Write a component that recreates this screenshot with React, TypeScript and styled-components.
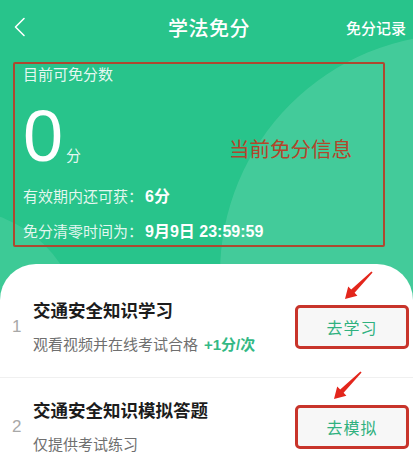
import React from 'react';
import styled, { createGlobalStyle } from 'styled-components';

const GlobalStyle = createGlobalStyle`
  html, body {
    margin: 0;
    padding: 0;
    background: #28c48b;
  }
  * {
    box-sizing: border-box;
  }
`;

type Task = {
    no: number;
    title: string;
    desc: string;
    bonus?: string;
    action: string;
    arrowLeft: number;
};

const tasks: Task[] = [
    { no: 1, title: '交通安全知识学习', desc: '观看视频并在线考试合格', bonus: '+1分/次', action: '去学习', arrowLeft: 47 },
    { no: 2, title: '交通安全知识模拟答题', desc: '仅提供考试练习', action: '去模拟', arrowLeft: 36 },
];

const BackIcon = () => (
    <svg width="12" height="20" viewBox="0 0 12 20">
        <polyline points="10,1.5 1.5,10 10,18.5" fill="none" stroke="#fff" strokeWidth="1.6" strokeLinecap="round" strokeLinejoin="round" />
    </svg>
);

const ArrowIcon = () => (
    <svg width="32" height="32" viewBox="0 0 32 32">
        <polygon
            points="29.4,1.4 30.6,2.6 12.6,22.8 15.4,25.8 3,29 6.2,16.6 9.2,19.4"
            fill="#e3261c"
        />
    </svg>
);

const App: React.FC = () => {
    return (
        <Page>
            <GlobalStyle />
            <BigCircle />
            <SmallCircle />

            <Header>
                <BackBtn><BackIcon /></BackBtn>
                <HeaderTitle>学法免分</HeaderTitle>
                <HeaderLink>免分记录</HeaderLink>
            </Header>

            <InfoBox>
                <InfoLabel>目前可免分数</InfoLabel>
                <ScoreRow>
                    <ScoreNum>0</ScoreNum>
                    <ScoreUnit>分</ScoreUnit>
                    <Annotation>当前免分信息</Annotation>
                </ScoreRow>
                <InfoLine>有效期内还可获：<InfoValue>6分</InfoValue></InfoLine>
                <InfoLine>免分清零时间为：<InfoValue>9月9日 23:59:59</InfoValue></InfoLine>
            </InfoBox>

            <Card>
                {tasks.map(t => (
                    <TaskRow key={t.no}>
                        <TaskNo>{t.no}</TaskNo>
                        <TaskText>
                            <TaskTitle>{t.title}</TaskTitle>
                            <TaskDesc>
                                {t.desc}
                                {t.bonus && <Bonus>{t.bonus}</Bonus>}
                            </TaskDesc>
                        </TaskText>
                        <ActionWrap>
                            <Arrow $left={t.arrowLeft}><ArrowIcon /></Arrow>
                            <ActionBtn>{t.action}</ActionBtn>
                        </ActionWrap>
                    </TaskRow>
                ))}
            </Card>
        </Page>
    );
};

const Page = styled.div`
  position: relative;
  width: 413px;
  height: 461px;
  overflow: hidden;
  background: #28c48b;
  font-family: "Liberation Sans", "Noto Sans CJK SC", sans-serif;
  color: #fff;
`;

/* 背景装饰圆 */
const BigCircle = styled.div`
  position: absolute;
  left: 220px;
  top: 34px;
  width: 480px;
  height: 480px;
  border-radius: 50%;
  background: rgba(255, 255, 255, 0.13);
`;

const SmallCircle = styled.div`
  position: absolute;
  left: -160px;
  top: 210px;
  width: 240px;
  height: 240px;
  border-radius: 50%;
  background: rgba(255, 255, 255, 0.1);
`;

/* 顶栏：左中右三栏，标题居中 */
const Header = styled.div`
  position: relative;
  height: 54px;
  display: grid;
  grid-template-columns: 1fr auto 1fr;
  align-items: center;
  padding: 0 7px 0 14px;
`;

const BackBtn = styled.div`
  display: flex;
  align-items: center;
`;

const HeaderTitle = styled.div`
  font-size: 20px;
  font-weight: 500;
  letter-spacing: 0.5px;
  margin-left: -2px;
`;

const HeaderLink = styled.div`
  justify-self: end;
  font-size: 15px;
  font-weight: 500;
`;

const InfoBox = styled.div`
  position: relative;
  margin: 8px 28px 0 13px;
  height: 185px;
  border: 2px solid #ad4830;
  border-radius: 2px;
  padding: 1px 0 3px 8px;
`;

const InfoLabel = styled.div`
  font-size: 15px;
  line-height: 20px;
  color: rgba(255, 255, 255, 0.9);
`;

const ScoreRow = styled.div`
  display: flex;
  align-items: baseline;
  margin-top: 15px;
  height: 72px;
`;

const ScoreNum = styled.div`
  font-size: 72px;
  line-height: 72px;
  font-family: "Liberation Sans", sans-serif;
`;

const ScoreUnit = styled.div`
  font-size: 15px;
  margin-left: 3px;
  color: rgba(255, 255, 255, 0.9);
`;

const Annotation = styled.div`
  margin-left: 148px;
  font-size: 20.5px;
  color: #b3452b;
  position: relative;
  top: -4px;
`;

const InfoLine = styled.div`
  margin-top: 15px;
  font-size: 15px;
  line-height: 20px;
  color: rgba(255, 255, 255, 0.88);
`;

const InfoValue = styled.span`
  font-size: 16px;
  font-weight: 700;
  color: #fff;
  margin-left: 2px;
`;

const Card = styled.div`
  position: relative;
  margin-top: 17px;
  background: #fff;
  border-radius: 36px 36px 0 0;
  padding-top: 14px;
  height: 200px;
`;

const TaskRow = styled.div`
  display: flex;
  align-items: center;
  padding: 21px 4px 22px 12px;
  border-bottom: 1px solid #f0f0f0;
`;

const TaskNo = styled.div`
  width: 21px;
  font-size: 17px;
  color: #a8a8a8;
  font-weight: 300;
`;

const TaskText = styled.div`
  flex: 1;
  display: flex;
  flex-direction: column;
  gap: 12px;
`;

const TaskTitle = styled.div`
  font-size: 17.5px;
  line-height: 24px;
  font-weight: 700;
  color: #1c1c1c;
`;

const TaskDesc = styled.div`
  font-size: 15px;
  line-height: 20px;
  color: #6f6f6f;
`;

const Bonus = styled.span`
  margin-left: 6px;
  color: #33b985;
  font-weight: 700;
`;

const ActionWrap = styled.div`
  position: relative;
`;

const Arrow = styled.div<{ $left: number }>`
  position: absolute;
  left: ${({ $left }) => $left}px;
  top: -35px;
  width: 32px;
  height: 32px;
`;

const ActionBtn = styled.div`
  width: 114px;
  height: 44px;
  display: flex;
  align-items: center;
  justify-content: center;
  border: 3px solid #c8342b;
  border-radius: 5px;
  background: #f7f7f7;
  color: #2fb17f;
  font-size: 16px;
  letter-spacing: 1px;
`;

export default App;
